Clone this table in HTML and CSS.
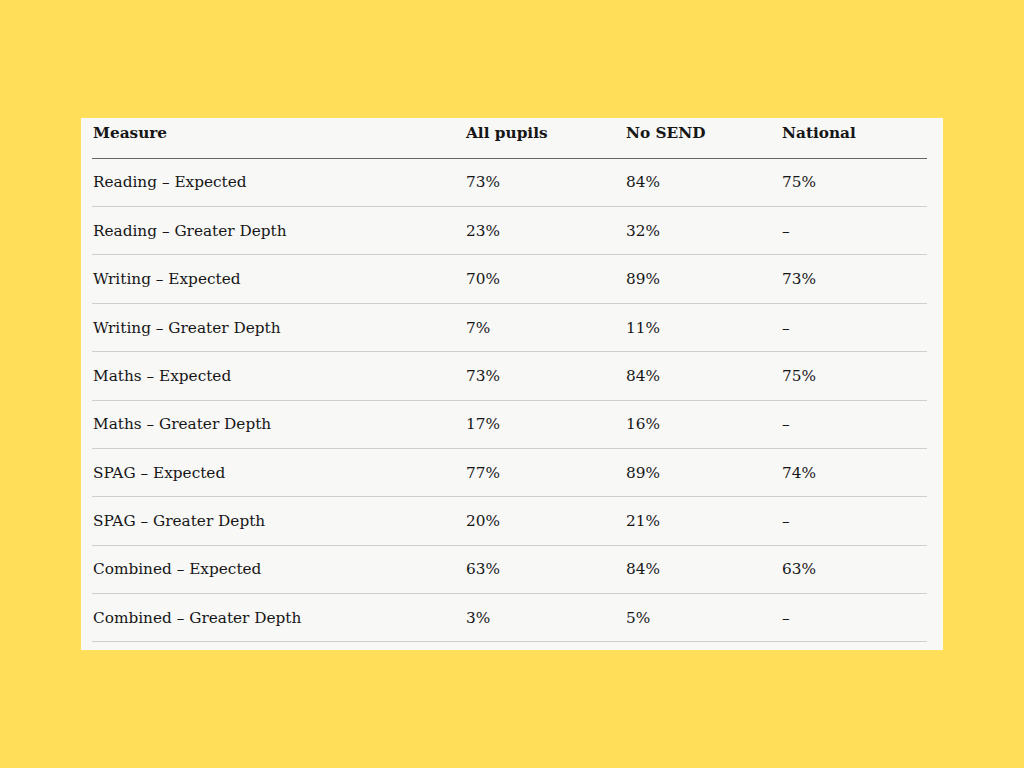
FILE: index.html
```html
<!DOCTYPE html>
<html lang="en">
<head>
<meta charset="utf-8">
<title>Results</title>
<link rel="stylesheet" href="styles.css">
</head>
<body>
<main class="page">
  <section class="card">
    <table class="results">
      <colgroup>
        <col class="c-measure">
        <col class="c-all">
        <col class="c-send">
        <col class="c-nat">
      </colgroup>
      <thead>
        <tr><th>Measure</th><th>All pupils</th><th>No SEND</th><th>National</th></tr>
      </thead>
      <tbody>
        <tr><td>Reading – Expected</td><td>73%</td><td>84%</td><td>75%</td></tr>
        <tr><td>Reading – Greater Depth</td><td>23%</td><td>32%</td><td>–</td></tr>
        <tr><td>Writing – Expected</td><td>70%</td><td>89%</td><td>73%</td></tr>
        <tr><td>Writing – Greater Depth</td><td>7%</td><td>11%</td><td>–</td></tr>
        <tr><td>Maths – Expected</td><td>73%</td><td>84%</td><td>75%</td></tr>
        <tr><td>Maths – Greater Depth</td><td>17%</td><td>16%</td><td>–</td></tr>
        <tr><td>SPAG – Expected</td><td>77%</td><td>89%</td><td>74%</td></tr>
        <tr><td>SPAG – Greater Depth</td><td>20%</td><td>21%</td><td>–</td></tr>
        <tr><td>Combined – Expected</td><td>63%</td><td>84%</td><td>63%</td></tr>
        <tr><td>Combined – Greater Depth</td><td>3%</td><td>5%</td><td>–</td></tr>
      </tbody>
    </table>
  </section>
</main>
</body>
</html>
```

FILE: styles.css
```css
html, body {
  margin: 0;
  padding: 0;
}
body {
  background: #ffde59;
  font-family: "DejaVu Serif", "Liberation Serif", serif;
  color: #161616;
}
.page {
  width: 1024px;
  height: 768px;
  padding: 118px 0 0 81px;
  box-sizing: border-box;
}
.card {
  width: 862px;
  box-sizing: border-box;
  background: #f8f8f6;
  padding: 0 16px 8px 11px;
}
.results {
  width: 835px;
  border-collapse: collapse;
  table-layout: fixed;
  font-size: 15.3px;
  line-height: 24px;
}
.c-measure { width: 374px; }
.c-all { width: 160px; }
.c-send { width: 156px; }
.c-nat { width: 145px; }
.results th {
  text-align: left;
  font-weight: bold;
  padding: 3px 0 12.7px 0;
  border-bottom: 1px solid #666;
}
.results td {
  padding: 11.7px 0;
  border-bottom: 1px solid #cfcfcd;
}
.results th:first-child,
.results td:first-child {
  padding-left: 1px;
}
```
